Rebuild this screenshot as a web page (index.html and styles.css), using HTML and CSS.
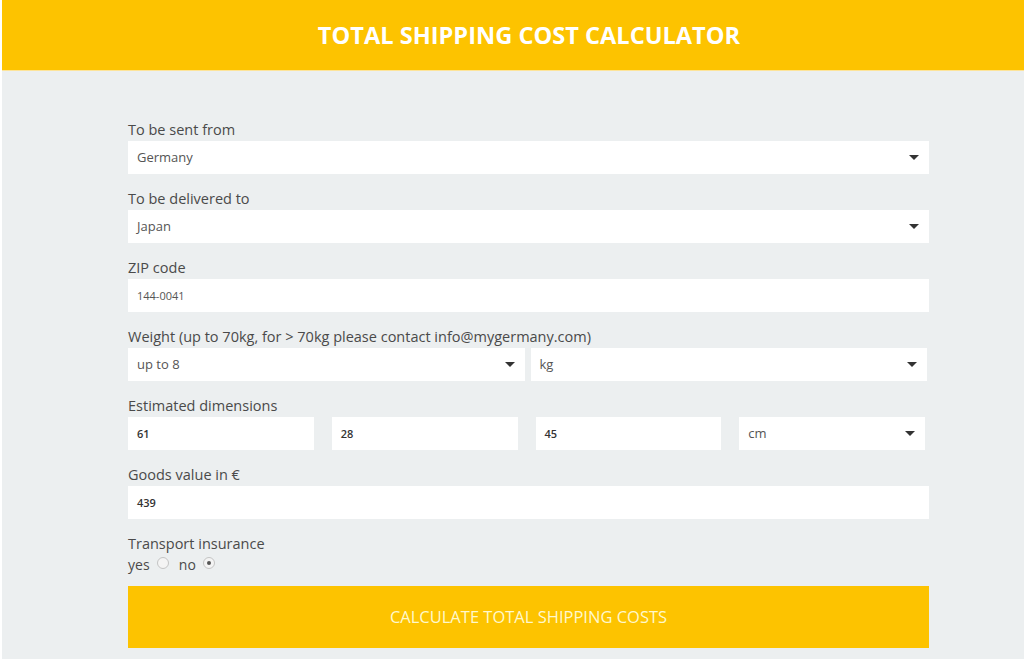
FILE: index.html
```html
<!DOCTYPE html>
<html>

<head>
    <meta charset="UTF-8">
    <title>Total shipping cost calculator</title>
    <link rel="stylesheet" href="styles.css">
</head>

<body>

<div class="header">
    <h1>TOTAL SHIPPING COST CALCULATOR</h1>
</div>

<form class="calc">
    <div class="group">
        <label>To be sent from</label>
        <div class="select">Germany</div>
    </div>
    <div class="group">
        <label>To be delivered to</label>
        <div class="select">Japan</div>
    </div>
    <div class="group">
        <label>ZIP code</label>
        <div class="input small">144-0041</div>
    </div>
    <div class="group">
        <label>Weight (up to 70kg, for &gt; 70kg please contact info@mygermany.com)</label>
        <div class="row weight">
            <div class="select">up to 8</div>
            <div class="select">kg</div>
        </div>
    </div>
    <div class="group">
        <label>Estimated dimensions</label>
        <div class="row dims">
            <div class="input num">61</div>
            <div class="input num">28</div>
            <div class="input num">45</div>
            <div class="select">cm</div>
        </div>
    </div>
    <div class="group">
        <label>Goods value in €</label>
        <div class="input num">439</div>
    </div>
    <div class="group radios">
        <label>Transport insurance</label>
        <div class="choice">
            yes <span class="radio"></span>
            no <span class="radio checked"></span>
        </div>
    </div>
    <div class="button">CALCULATE TOTAL SHIPPING COSTS</div>
</form>

</body>

</html>
```

FILE: styles.css
```css
* {
    margin: 0;
    padding: 0;
    box-sizing: border-box;
}
body {
    background: #eceff0;
    font-family: "Open Sans", "Liberation Sans", sans-serif;
    color: #4a4a4a;
    border-left: 2px solid #fff;
    height: 659px;
    overflow: hidden;
}
.header {
    height: 71px;
    background: #fdc300;
    border-bottom: 1px solid #fde49a;
    padding-left: 32px;
    text-align: center;
}
.header h1 {
    font-size: 23.6px;
    font-weight: 700;
    line-height: 70px;
    color: #fff;
}
.calc {
    width: 801px;
    margin-left: 126px;
    padding-top: 49px;
}
.group {
    margin-bottom: 15px;
}
.group label {
    display: block;
    font-size: 14.5px;
    line-height: 20px;
    margin-bottom: 1px;
}
.select,
.input {
    position: relative;
    height: 33px;
    line-height: 33px;
    background: #fff;
    padding-left: 9px;
    font-size: 13px;
    color: #555;
}
.select::after {
    content: "";
    position: absolute;
    right: 10px;
    top: 14px;
    border-left: 5px solid transparent;
    border-right: 5px solid transparent;
    border-top: 5px solid #333;
}
.input.small {
    font-size: 11px;
}
.input.num {
    font-size: 11px;
    font-weight: 600;
    color: #333;
}
.row {
    display: flex;
}
.weight {
    gap: 6px;
}
.weight .select {
    flex: 1;
}
.weight .select:last-child {
    margin-right: 2px;
}
.dims {
    gap: 18px;
    padding-right: 4px;
}
.dims > div {
    flex: 1;
}
.radios {
    margin-bottom: 10px;
}
.radios label {
    margin-bottom: 0;
}
.choice {
    font-size: 14px;
    line-height: 22px;
}
.radio {
    display: inline-block;
    width: 12px;
    height: 12px;
    border: 1px solid #c4c4c4;
    border-radius: 50%;
    background: #f4f4f4;
    vertical-align: 1px;
    margin: 0 6px 0 4px;
    position: relative;
}
.radio.checked::after {
    content: "";
    position: absolute;
    left: 3px;
    top: 3px;
    width: 4px;
    height: 4px;
    border-radius: 50%;
    background: #555;
}
.button {
    height: 62px;
    line-height: 62px;
    background: #fdc300;
    text-align: center;
    font-size: 16.5px;
    color: #fff8cc;
}
```
